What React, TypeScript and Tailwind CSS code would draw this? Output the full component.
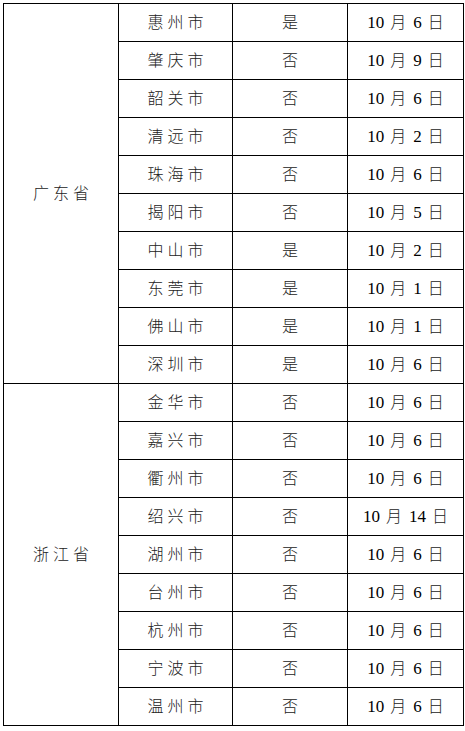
import * as React from "react"

interface Row {
    city: string
    flag: string
    date: string
}

const groups: { province: string; rows: Row[] }[] = [
    {
        province: "广东省",
        rows: [
            { city: "惠州市", flag: "是", date: "6" },
            { city: "肇庆市", flag: "否", date: "9" },
            { city: "韶关市", flag: "否", date: "6" },
            { city: "清远市", flag: "否", date: "2" },
            { city: "珠海市", flag: "否", date: "6" },
            { city: "揭阳市", flag: "否", date: "5" },
            { city: "中山市", flag: "是", date: "2" },
            { city: "东莞市", flag: "是", date: "1" },
            { city: "佛山市", flag: "是", date: "1" },
            { city: "深圳市", flag: "是", date: "6" },
        ],
    },
    {
        province: "浙江省",
        rows: [
            { city: "金华市", flag: "否", date: "6" },
            { city: "嘉兴市", flag: "否", date: "6" },
            { city: "衢州市", flag: "否", date: "6" },
            { city: "绍兴市", flag: "否", date: "14" },
            { city: "湖州市", flag: "否", date: "6" },
            { city: "台州市", flag: "否", date: "6" },
            { city: "杭州市", flag: "否", date: "6" },
            { city: "宁波市", flag: "否", date: "6" },
            { city: "温州市", flag: "否", date: "6" },
        ],
    },
]

const cell = "border border-black p-0 text-center align-middle"
const cjk = "font-light text-[#222]"
const spaced = "tracking-[4px] pl-[4px] font-light text-[#222]"

export default function App() {
    return (
        <div
            className="min-h-[731px] w-[465px] bg-white pt-[3px] pl-[3px] text-black"
            style={{ fontFamily: '"Liberation Serif", "Noto Sans CJK SC", serif' }}
        >
            <table className="w-[460px] table-fixed border-collapse text-[16px] leading-none">
                <colgroup>
                    <col className="w-[115px]" />
                    <col className="w-[114px]" />
                    <col className="w-[115px]" />
                    <col className="w-[116px]" />
                </colgroup>
                <tbody>
                    {groups.map((g) =>
                        g.rows.map((r, i) => (
                            <tr key={g.province + r.city} className="h-[38px]">
                                {i === 0 && (
                                    <td rowSpan={g.rows.length} className={cell}>
                                        <span className={spaced}>{g.province}</span>
                                    </td>
                                )}
                                <td className={cell}>
                                    <span className={spaced}>{r.city}</span>
                                </td>
                                <td className={cell}>
                                    <span className={cjk}>{r.flag}</span>
                                </td>
                                <td className={cell}>
                                    <span className="text-[17px]">10</span>
                                    <span className={cjk + " ml-[6px]"}>月</span>
                                    <span className="ml-[7px] text-[17px]">{r.date}</span>
                                    <span className={cjk + " ml-[6px]"}>日</span>
                                </td>
                            </tr>
                        ))
                    )}
                </tbody>
            </table>
        </div>
    )
}
